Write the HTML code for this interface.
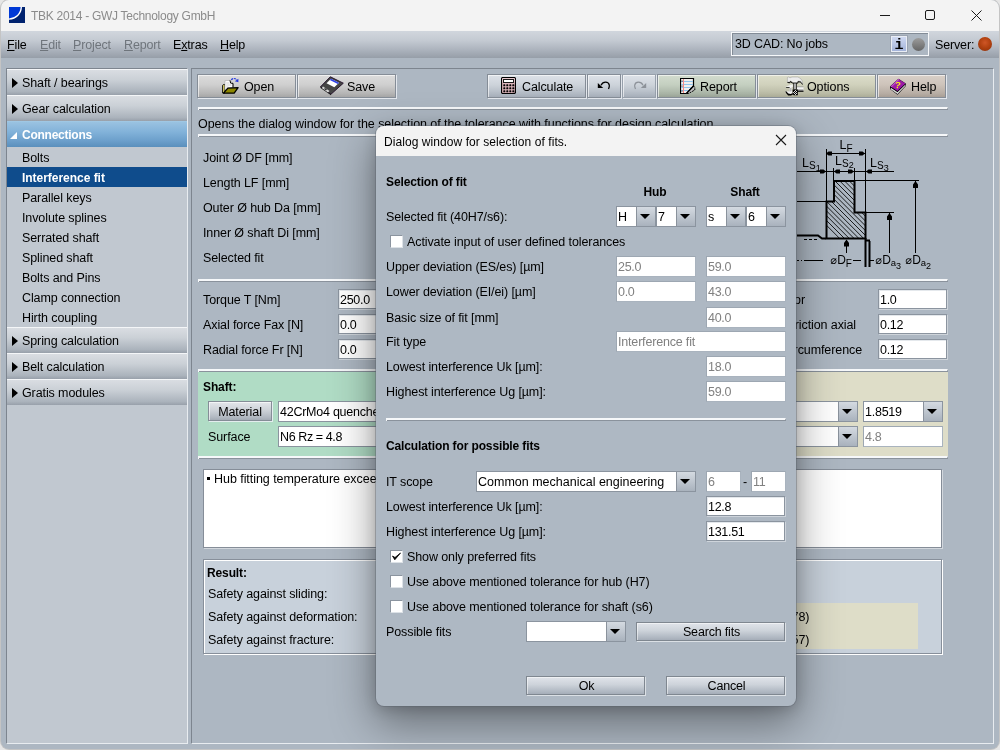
<!DOCTYPE html>
<html><head><meta charset="utf-8"><title>TBK 2014 - GWJ Technology GmbH</title>
<style>
html,body{margin:0;padding:0;}
body{width:1000px;height:750px;overflow:hidden;background:#e6e6e6;font-family:"Liberation Sans",Arial,sans-serif;font-size:12px;color:#000;}
#win{will-change:transform;position:absolute;left:0;top:0;width:1000px;height:750px;overflow:hidden;}
#bg{position:absolute;left:1px;top:0;width:998px;height:749px;border-radius:8px;background:#adb7c2;overflow:hidden;box-shadow:0 0 0 1px #c4c4c4;}
#win *{box-sizing:border-box;}
.a{position:absolute;}
.t{position:absolute;white-space:nowrap;height:20px;line-height:20px;font-size:12.5px;letter-spacing:-.1px;padding-top:1px;}
.b{font-weight:bold;font-size:12px;letter-spacing:-.12px;}
#title{position:absolute;left:0;top:0;width:998px;height:31px;background:#f3f3f3;}
#menubar{position:absolute;left:0;top:31px;width:998px;height:27px;background:linear-gradient(#d1d6dd 0%,#c4cad2 35%,#adb4be 68%,#969ea8 100%);}
.m{position:absolute;top:4px;height:20px;line-height:20px;font-size:12.5px;white-space:nowrap;letter-spacing:-.15px;}
.m u{text-decoration:underline;text-underline-offset:1px;}
.dis{color:#6f757c;}
/* left nav */
#nav{position:absolute;left:6px;top:68px;width:182px;height:676px;background:#c1c8d0;border:1px solid;border-color:#7d858f #e8ecf0 #e8ecf0 #7d858f;}
.hd{position:absolute;left:0;width:180px;height:26px;border-top:1px solid #f4f6f8;background:linear-gradient(#d9dde2 0%,#cad0d6 40%,#abb3bc 86%,#98a0aa 100%);}
.hd .t{left:15px;top:2px;}
.hd i{position:absolute;left:5px;top:7.5px;width:0;height:0;border-left:6px solid #000;border-top:5px solid transparent;border-bottom:5px solid transparent;}
.hd.sel{border-top-color:#9fc7e4;background:linear-gradient(#9ac2e1 0%,#82b2d9 40%,#6c9fcb 75%,#5a8fbc 100%);}
.hd.sel .t{color:#fff;font-weight:bold;font-size:12px;letter-spacing:-.25px;}
.it{position:absolute;left:0;width:180px;height:20px;}
.it .t{left:15px;top:0;}
.it.sel{background:#0f4c8c;}
.it.sel .t{color:#fff;font-weight:bold;font-size:12px;letter-spacing:-.03px;}
/* main */
#main{position:absolute;left:191px;top:68px;width:803px;height:676px;border:1px solid;border-color:#7d858f #e8ecf0 #e8ecf0 #7d858f;background:#adb7c2;}
.btn{position:absolute;height:24px;border:1px solid #858d97;background:linear-gradient(#dcdcdc 0%,#cfcfcf 45%,#b4b4b4 85%,#a6a6a6 100%);box-shadow:inset 1px 1px 0 rgba(255,255,255,.6),1px 1px 0 rgba(236,240,244,.85);}
.btn .t{top:1px;}
.sep{position:absolute;height:3px;border-top:2px solid #f6f8fa;border-left:1px solid #f6f8fa;border-right:1px solid #8a929c;background:#8a929c;}
.inp{position:absolute;height:20px;background:#fff;border:1px solid #8b949f;box-shadow:1px 1px 0 rgba(255,255,255,.4),inset 1px 1px 0 #e4e8ec;line-height:20px;padding-left:1px;white-space:nowrap;overflow:hidden;font-size:12.5px;letter-spacing:-.3px;}
.inp.ro{color:#818181;height:21px;border-color:#9da7b2 #a9b3be #a9b3be #9da7b2;box-shadow:none;}
.cb{position:absolute;height:21px;background:#fff;border:1px solid #8b949f;line-height:20px;padding-left:1px;white-space:nowrap;overflow:hidden;font-size:12.5px;letter-spacing:-.25px;}
.cb b{position:absolute;right:0;top:0;width:19px;height:19px;border-left:1px solid #8a929c;background:linear-gradient(#d4dae1,#a9b2bd);}
.cb b:after{content:"";position:absolute;left:3px;top:7px;border-top:5.5px solid #000;border-left:5px solid transparent;border-right:5px solid transparent;}
.chk{position:absolute;width:13px;height:13px;background:#fff;border:1px solid;border-color:#8b949f #dde2e7 #dde2e7 #8b949f;}
#mc{position:absolute;left:0;top:0;width:1000px;height:750px;}
/* dialog */
#dlg{position:absolute;left:376px;top:126px;width:420px;height:580px;border-radius:8px;background:#aeb8c3;box-shadow:0 0 0 1px rgba(90,98,108,.4),0 16px 44px 2px rgba(0,0,0,.40),0 3px 14px rgba(0,0,0,.16);overflow:hidden;}
#dt{position:absolute;left:0;top:0;width:420px;height:30px;background:#f3f3f3;}
.dbtn{position:absolute;border:1px solid #7f8790;background:linear-gradient(#e0e4ea 0%,#cdd3da 45%,#b0b8c2 85%,#a5adb8 100%);box-shadow:inset 1px 1px 0 rgba(255,255,255,.5),1px 1px 0 rgba(230,234,238,.8);text-align:center;font-size:12.5px;letter-spacing:-.18px;white-space:nowrap;padding-left:2px;}
</style></head><body>
<div id="win">
<div id="bg">
<div id="title">
<svg class="a" style="left:8px;top:7px" width="16" height="16" viewBox="0 0 16 16"><rect width="16" height="16" fill="#00226f"/><path d="M0 0H12.5C12 7 7 11.5 0 12Z" fill="#0039d6"/><path d="M12.3 0C12 7 7 11.6 0 12.1" fill="none" stroke="#fff" stroke-width="1.400"/></svg>
<div class="a" style="left:30px;top:6px;height:20px;line-height:20px;font-size:12px;letter-spacing:-.28px;color:#8b8b8b;white-space:nowrap;">TBK 2014 - GWJ Technology GmbH</div>
<svg class="a" style="left:860px;top:0" width="138" height="31" viewBox="0 0 138 31"><g stroke="#1a1a1a" stroke-width="1" fill="none"><path d="M19 15.5H29"/><rect x="64.500" y="10.500" width="9" height="9" rx="1.500"/><path d="M110.500 10.500L120.500 20.500M120.500 10.500L110.500 20.500"/></g></svg>
</div>
<div id="menubar">
<div class="m" style="left:6px;"><u>F</u>ile</div>
<div class="m dis" style="left:39px"><u>E</u>dit</div>
<div class="m dis" style="left:72px"><u>P</u>roject</div>
<div class="m dis" style="left:123px"><u>R</u>eport</div>
<div class="m" style="left:172px">E<u>x</u>tras</div>
<div class="m" style="left:219px"><u>H</u>elp</div>
<div class="a" style="left:730px;top:1px;width:198px;height:24px;border:1px solid #f6f8fa;background:#adb7c2;box-shadow:inset 1px 1px 0 #838c97;"></div>
<div class="m" style="left:734px;top:3px;">3D CAD: No jobs</div>
<div class="a" style="left:890px;top:5px;width:16px;height:16px;border:1px solid #e9edf4;background:linear-gradient(#cfd9f2,#a3b3d9);box-shadow:0 0 0 1px rgba(140,150,165,.55);font-family:'Liberation Mono',monospace;font-weight:bold;font-size:15px;line-height:17px;text-align:center;">i</div>
<div class="a" style="left:911px;top:7px;width:13px;height:13px;border-radius:50%;background:linear-gradient(#9c9c9c,#666);"></div>
<div class="m" style="left:934px;top:4px;">Server:</div>
<div class="a" style="left:977px;top:6px;width:14px;height:14px;border-radius:50%;background:radial-gradient(circle at 50% 40%,#cf5626,#b0400f 50%,#85300e 100%);"></div>
</div>
</div>
<div id="nav">
<div class="hd" style="top:0px"><i></i><div class="t">Shaft / bearings</div></div>
<div class="hd" style="top:26px"><i></i><div class="t">Gear calculation</div></div>
<div class="hd sel" style="top:52px"><i style="border:0;left:3px;top:10px;border-bottom:7px solid #fff;border-left:7px solid transparent;"></i><div class="t">Connections</div></div>
<div class="it" style="top:78px"><div class="t">Bolts</div></div>
<div class="it sel" style="top:98px"><div class="t">Interference fit</div></div>
<div class="it" style="top:118px"><div class="t">Parallel keys</div></div>
<div class="it" style="top:138px"><div class="t">Involute splines</div></div>
<div class="it" style="top:158px"><div class="t">Serrated shaft</div></div>
<div class="it" style="top:178px"><div class="t">Splined shaft</div></div>
<div class="it" style="top:198px"><div class="t">Bolts and Pins</div></div>
<div class="it" style="top:218px"><div class="t">Clamp connection</div></div>
<div class="it" style="top:238px"><div class="t">Hirth coupling</div></div>
<div class="hd" style="top:258px"><i></i><div class="t">Spring calculation</div></div>
<div class="hd" style="top:284px"><i></i><div class="t">Belt calculation</div></div>
<div class="hd" style="top:310px"><i></i><div class="t">Gratis modules</div></div>
</div>
<div id="main"></div>
<div id="mc">
<div class="btn" style="left:197px;top:74px;width:99px;"><svg class="a" style="left:24px;top:2px" width="17" height="17" viewBox="0 0 17 17"><path d="M9.300 3C10.500 1 13.500 .9 15 3.200" fill="none" stroke="#2438e0" stroke-width="1.100" stroke-dasharray="2.200 .8"/><path d="M12.800 4.300L16.400 1.800V5.200Z" fill="#2438e0"/>
<path d="M.6 16V8.300L1.400 7.600H3V16Z" fill="#ddd46a" stroke="#000" stroke-width=".9"/>
<path d="M3 3.700L8 3.400L11 6.400V10.500L5.900 11L3 13Z" fill="#fff" stroke="#a8a8a8" stroke-width=".6"/><path d="M8 3.400L8.600 6.100L11 6.400V10.400" fill="none" stroke="#000" stroke-width="1"/><path d="M4.200 6H7.500M4.200 8H9.500M4.200 10H6.500" stroke="#c4c4c4" stroke-width=".8"/>
<path d="M1.500 16.200L5.900 11.100L16.100 10.700L12.200 16.200Z" fill="#8d8700" stroke="#000" stroke-width="1.300" stroke-linejoin="round"/></svg><div class="t" style="left:46px">Open</div></div>
<div class="btn" style="left:297px;top:74px;width:99px;"><svg class="a" style="left:22px;top:1px" width="24" height="20" viewBox="0 0 24 20"><path d="M10.300 .8L23.300 7.200L11 18.200L.5 10.800Z" fill="#454545" stroke="#2a1830" stroke-width="1"/>
<path d="M.5 10.800L11 18.200V19.300L.5 12Z" fill="#111"/>
<path d="M11 2.800L19 6.800L14.300 11.300L6.500 7.200Z" fill="#fff"/><path d="M11 2.800L19 6.800L17.800 8L9.800 4Z" fill="#2b3ee6"/>
<path d="M3 10.500L9.500 15L8 16.500L1.800 12Z" fill="#d8d8d8"/><path d="M5 12L7 13.400L6 14.400L4 13Z" fill="#333"/></svg><div class="t" style="left:49px">Save</div></div>
<div class="btn" style="left:487px;top:74px;width:99px;background:linear-gradient(#dde2e8 0%,#cdd3da 45%,#b2bac4 85%,#a6aeb9 100%);"><svg class="a" style="left:13px;top:2px" width="15" height="17" viewBox="0 0 15 17"><rect x=".5" y=".5" width="14" height="16" rx="1.500" fill="#dcb4bb" stroke="#000" stroke-width="1.200"/><rect x="1.300" y="1.300" width="12.400" height="4" fill="#ecd0d4"/>
<rect x="2.500" y="2.500" width="10" height="3" fill="#fff" stroke="#1a1a1a" stroke-width="1"/>
<g fill="#000"><rect x="2.3" y="7.3" width="2" height="2" rx=".6"/><rect x="2.3" y="10.3" width="2" height="2" rx=".6"/><rect x="2.3" y="13.3" width="2" height="2" rx=".6"/><rect x="5.3" y="7.3" width="2" height="2" rx=".6"/><rect x="5.3" y="10.3" width="2" height="2" rx=".6"/><rect x="5.3" y="13.3" width="2" height="2" rx=".6"/><rect x="8.3" y="7.3" width="2" height="2" rx=".6"/><rect x="8.3" y="10.3" width="2" height="2" rx=".6"/><rect x="8.3" y="13.3" width="2" height="2" rx=".6"/><rect x="11.3" y="7.3" width="2" height="2" rx=".6"/><rect x="11.3" y="10.3" width="2" height="2" rx=".6"/><rect x="11.3" y="13.3" width="2" height="2" rx=".6"/></g></svg><div class="t" style="left:34px">Calculate</div></div>
<div class="btn" style="left:587px;top:74px;width:34px;background:linear-gradient(#dde2e8 0%,#cdd3da 45%,#b2bac4 85%,#a6aeb9 100%);"><svg class="a" style="left:9px;top:6px" width="14" height="9" viewBox="0 0 14 9"><path d="M.8 2V7H6.200Z" fill="#000"/><path d="M4 4.200C6 .2 11.500 .2 12.300 4.200C12.500 5.500 12 7 11.500 8" fill="none" stroke="#000" stroke-width="1.300"/></svg><div class="t" style="left:-588px"></div></div>
<div class="btn" style="left:622px;top:74px;width:34px;border-color:#98a1ac;background:linear-gradient(#dde2e8 0%,#cdd3da 45%,#b2bac4 85%,#a6aeb9 100%);"><svg class="a" style="left:10px;top:6px" width="14" height="9" viewBox="0 0 14 9"><path d="M13.200 2V7H7.800Z" fill="#8d9299"/><path d="M10 4.200C8 .2 2.500 .2 1.700 4.200C1.500 5.500 2 7 2.500 8" fill="none" stroke="#8d9299" stroke-width="1.200"/></svg><div class="t" style="left:-623px"></div></div>
<div class="btn" style="left:657px;top:74px;width:99px;background:linear-gradient(#d3dccf 0%,#c4cfc0 45%,#a9b4a6 85%,#9aa497 100%);"><svg class="a" style="left:22px;top:3px" width="16" height="17" viewBox="0 0 16 17"><path d="M.5 .5H13.500V8L6.500 15.500H.5Z" fill="#f1efee" stroke="#000" stroke-width="1.200"/>
<path d="M1.200 3.500H13M1.200 6.500H13M1.200 9.500H11M1.200 12.500H8" stroke="#8fc4ec" stroke-width="1"/><path d="M3.500 1V15" stroke="#f58a8a" stroke-width="1"/>
<path d="M2 3H2.010M2 8H2.010M2 13H2.010" stroke="#000" stroke-width="1.200" stroke-linecap="round"/>
<path d="M13.500 8L14.800 9.500V12L8.500 15.500H6.500Z" fill="#c2c2c2" stroke="#000" stroke-width="1" stroke-dasharray="2 .8"/><path d="M13.500 8L6.500 15.500" stroke="#000" stroke-width="1.200"/></svg><div class="t" style="left:42px">Report</div></div>
<div class="btn" style="left:757px;top:74px;width:119px;background:linear-gradient(#dcddca 0%,#d0d1bc 45%,#b9baa5 85%,#abac97 100%);"><svg class="a" style="left:27px;top:1px" width="19" height="20" viewBox="0 0 19 20">
<path d="M2.400 1.500L3.500 1L5 1.800L7 1H12.900L15.500 2.500L17 4.500L17.800 7.500L17 7.300L15.800 5.400L13 5L12.300 6.500H8L5.500 4.800L4.600 6H2.400Z" fill="#ececec" stroke="#9a9a9a" stroke-width=".5"/>
<path d="M2.400 6L4.600 6.200L5.500 5L7.800 6.700H12.300L13 5.200L15.600 5.600L17.200 7.800L17.800 7.600L17.500 9L15.500 6.500L13.500 6.300L13 7.600H7.500L5.500 6.200L4.800 7.200L2.600 7Z" fill="#000"/>
<rect x="8.400" y="7" width="3.300" height="6.600" fill="#000"/><rect x="9.300" y="7.400" width="1.400" height="6" fill="#f6f6f6"/>
<path d="M.5 11L5.600 8.800L7.800 8.600V10.800L6.500 11.500V15L7.400 14.200L7.600 17.200L5.600 18.600H3.300L1 16.500L.4 15.300L4.600 15.400V11.500L.8 11.600Z" fill="#f0f0f0"/>
<path d="M.6 11.200H4.600V12H1.500ZM.4 15.300L1.200 15.200L3.300 17.500L5.500 18L7.600 17.200L7.800 18.800L5.800 19.500H3.200L1 17Z" fill="#000"/>
<path d="M4.600 12H6.400V15.400H4.600Z" fill="#b8b8b8"/>
<rect x="12" y="10.800" width="6.500" height="4.300" fill="#f2f2f2"/><rect x="12" y="13" width="6.500" height="1.300" fill="#bdbdbd"/><rect x="12" y="14.500" width="6.500" height="1.300" fill="#000"/><rect x="12" y="10.500" width="6.500" height=".7" fill="#8a8a8a"/>
<path d="M7.600 13.500H12.800V19.200H8.600L7.600 17.500Z" fill="#000"/><path d="M9 15H10V16H9ZM11 15H12V16H11ZM10 16H11V17H10ZM9 17H10V18H9ZM11 17H12V18H11ZM10 14H11V15H10ZM8 16H9V17H8ZM10 18H11V19H10Z" fill="#d8d8d8"/></svg><div class="t" style="left:49px">Options</div></div>
<div class="btn" style="left:877px;top:74px;width:69px;background:linear-gradient(#d9d0c8 0%,#cdc3ba 45%,#b6aca3 85%,#a89e95 100%);"><svg class="a" style="left:11px;top:3px" width="18" height="18" viewBox="0 0 18 18"><path d="M1 11V8.500L9.500 .8L16.800 5.500V8L8.500 16.800Z" fill="#000"/>
<path d="M1.500 8.500L9.500 1L16.500 5.500L8.500 13Z" fill="#9c1aa6"/><path d="M1.500 8.500L9.500 1L10.500 1.600L2.500 9.200Z" fill="#c34fd0"/>
<path d="M1.800 9.800L8.500 14.200L16.300 6.800V7.800L8.500 16L1.800 11.200Z" fill="#f2f2f2"/><path d="M1.800 10.800L8.500 15.200L16.300 7.500" fill="none" stroke="#b0b0b0" stroke-width=".6"/>
<text x="6.200" y="10.200" font-family="Liberation Sans, sans-serif" font-weight="bold" font-size="9" fill="#f4ee1c" transform="rotate(8 9 7)">?</text></svg><div class="t" style="left:33px">Help</div></div>
<div class="sep" style="left:198px;top:107px;width:750px"></div>
<div class="sep" style="left:198px;top:134px;width:750px"></div>
<div class="sep" style="left:198px;top:279px;width:750px"></div>
<div class="sep" style="left:198px;top:369px;width:750px"></div>
<div class="t" style="left:198px;top:113px;letter-spacing:-.06px;">Opens the dialog window for the selection of the tolerance with functions for design calculation</div>
<div class="t" style="left:203px;top:147px;">Joint Ø DF [mm]</div>
<div class="t" style="left:203px;top:172px;">Length LF [mm]</div>
<div class="t" style="left:203px;top:197px;">Outer Ø hub Da [mm]</div>
<div class="t" style="left:203px;top:222px;">Inner Ø shaft Di [mm]</div>
<div class="t" style="left:203px;top:247px;">Selected fit</div>
<div class="t" style="left:203px;top:289px;">Torque T [Nm]</div>
<div class="inp" style="left:338px;top:289px;width:70px">250.0</div>
<div class="t" style="left:203px;top:314px;">Axial force Fax [N]</div>
<div class="inp" style="left:338px;top:314px;width:70px">0.0</div>
<div class="t" style="left:203px;top:339px;">Radial force Fr [N]</div>
<div class="inp" style="left:338px;top:339px;width:70px">0.0</div>
<div class="t" style="right:195px;top:289px">Application factor</div>
<div class="inp" style="left:878px;top:289px;width:69px">1.0</div>
<div class="t" style="right:144px;top:314px">Coefficient of friction axial</div>
<div class="inp" style="left:878px;top:314px;width:69px">0.12</div>
<div class="t" style="right:138px;top:339px">Coefficient of friction circumference</div>
<div class="inp" style="left:878px;top:339px;width:69px">0.12</div>
<svg class="a" style="left:790px;top:136px" width="160" height="144" viewBox="790 136 160 144" font-family="Liberation Sans, sans-serif" fill="#000">
<defs><clipPath id="hc"><path d="M834 181H854.500V212.500H865.500V238.500H826.500V201.500H834Z"/></clipPath></defs>
<g stroke="#000" stroke-width="1" fill="none" shape-rendering="crispEdges">
<path d="M826.500 149V201M865.500 149V213M826 153.500H865M797 171.500H894M833.500 168V181M854.500 168V181M797 201.500H826M854 180.500H919M865 212.500H894M915.500 181V253M889.500 213V253M846.500 240V253"/>
<path d="M804 239.500H818" stroke-dasharray="3 2"/>
<path d="M797 260.500H799M801 260.500H802M804 260.500H823M853 260.500H861M870 260.500H874"/>
</g>
<g clip-path="url(#hc)" stroke="#000" stroke-width=".85" fill="none"><path d="M820 127.6L870 177.6M820 132.4L870 182.4M820 137.2L870 187.2M820 142.0L870 192.0M820 146.8L870 196.8M820 151.6L870 201.6M820 156.4L870 206.4M820 161.2L870 211.2M820 166.0L870 216.0M820 170.8L870 220.8M820 175.6L870 225.6M820 180.4L870 230.4M820 185.2L870 235.2M820 190.0L870 240.0M820 194.8L870 244.8M820 199.6L870 249.6M820 204.4L870 254.4M820 209.2L870 259.2M820 214.0L870 264.0M820 218.8L870 268.8"/></g>
<path d="M834 181H854.500V212.500H865.500V238.500H826.500V201.500H834Z" fill="none" stroke="#000" stroke-width="2" stroke-linejoin="miter"/>
<path d="M797 235.500H818L822 238.500H826" fill="none" stroke="#000" stroke-width="2"/>
<path d="M865.500 238V267M869.500 241V267M865 240.500H870" fill="none" stroke="#000" stroke-width="2"/>
<path d="M826 153.5L828.5 151.5H832V155.5H828.5ZM865 153.5L862.5 151.5H859V155.5H862.5ZM826 171.5L823.5 169.5H820V173.5H823.5ZM834 171.5L836.5 169.5H840V173.5H836.5ZM854 171.5L851.5 169.5H848V173.5H851.5ZM866 171.5L868.5 169.5H872V173.5H868.5ZM915.5 181L913.0 184.5V188H918.0V184.5ZM889.5 213L887.0 216.5V220H892.0V216.5ZM846.5 239.5L844.0 243.0V246.5H849.0V243.0Z"/>
<text x="839.500" y="149" font-size="12.500">L<tspan font-size="10" dy="2.500">F</tspan></text>
<text x="802" y="167" font-size="12.500">L<tspan font-size="10" dy="2">S</tspan><tspan font-size="9" dy="1.500">1</tspan></text>
<text x="835" y="164.500" font-size="12.500">L<tspan font-size="10" dy="2">S</tspan><tspan font-size="9" dy="1.500">2</tspan></text>
<text x="870" y="167" font-size="12.500">L<tspan font-size="10" dy="2">S</tspan><tspan font-size="9" dy="1.500">3</tspan></text>
<text x="830.500" y="264" font-size="12"><tspan font-family="DejaVu Sans, sans-serif" font-size="11">⌀</tspan>D<tspan font-size="10" dy="2.500">F</tspan></text>
<text x="875.500" y="264" font-size="12"><tspan font-family="DejaVu Sans, sans-serif" font-size="11">⌀</tspan>D<tspan font-size="9.500" dy="2">a</tspan><tspan font-size="9" dy="2.500">3</tspan></text>
<text x="905.500" y="264" font-size="12"><tspan font-family="DejaVu Sans, sans-serif" font-size="11">⌀</tspan>D<tspan font-size="9.500" dy="2">a</tspan><tspan font-size="9" dy="2.500">2</tspan></text>
</svg>
<div class="a" style="left:198px;top:372px;width:375px;height:84px;background:#b0dcc5"></div>
<div class="a" style="left:573px;top:372px;width:375px;height:84px;background:#deddc8"></div>
<div class="sep" style="left:198px;top:456px;width:750px;"></div>
<div class="t b" style="left:203px;top:376px;">Shaft:</div>
<div class="t b" style="left:578px;top:376px;">Hub:</div>
<div class="btn" style="left:208px;top:401px;width:64px;height:20px;background:linear-gradient(#e3e6ea 0%,#cdd2d8 45%,#b1b8c1 85%,#a3abb5 100%);"><div class="t" style="left:0;width:62px;text-align:center;top:-1px">Material</div></div>
<div class="cb" style="left:278px;top:401px;width:205px;letter-spacing:-.25px">42CrMo4 quenched and tempered<b></b></div>
<div class="t" style="left:208px;top:426px;">Surface</div>
<div class="cb" style="left:278px;top:426px;width:205px;letter-spacing:-.4px">N6 Rz = 4.8<b></b></div>
<div class="cb" style="left:653px;top:401px;width:205px">EN-GJL-250<b></b></div>
<div class="cb" style="left:863px;top:401px;width:80px">1.8519<b></b></div>
<div class="cb" style="left:653px;top:426px;width:205px;letter-spacing:-.4px">N6 Rz = 4.8<b></b></div>
<div class="inp ro" style="left:863px;top:426px;width:80px">4.8</div>
<div class="a" style="left:203px;top:469px;width:739px;height:79px;background:#fff;border:1px solid #858d98;box-shadow:1px 1px 0 rgba(255,255,255,.45);"></div>
<div class="a" style="left:207px;top:477px;width:3px;height:3px;background:#000"></div><div class="t" style="left:214px;top:468px;letter-spacing:-.05px;">Hub fitting temperature exceeds the permissible value</div>
<div class="a" style="left:203px;top:559px;width:739px;height:95px;background:#c8d1db;border:1px solid #878f9a;box-shadow:inset 1px 1px 0 #fff,1px 1px 0 #fff;"></div>
<div class="a" style="left:573px;top:603px;width:345px;height:46px;background:#deddc8"></div>
<div class="t b" style="left:207px;top:562px;">Result:</div>
<div class="t" style="left:208px;top:583px;">Safety against sliding:</div>
<div class="t" style="left:208px;top:606px;">Safety against deformation:</div>
<div class="t" style="left:208px;top:629px;">Safety against fracture:</div>
<div class="t" style="left:750px;top:606px;">1.51 (1.78)</div>
<div class="t" style="left:750px;top:629px;">1.89 (2.57)</div>
</div>
<div id="dlg">
<div id="dt"></div>
<div class="t" style="left:8px;top:5px;font-size:12px;letter-spacing:.07px;">Dialog window for selection of fits.</div>
<svg class="a" style="left:399px;top:8px" width="12" height="12" viewBox="0 0 12 12"><path d="M1 1L11 11M11 1L1 11" stroke="#1a1a1a" stroke-width="1.100" fill="none"/></svg>
<div class="t b" style="left:10px;top:45px;">Selection of fit</div>
<div class="t b" style="left:259px;top:55px;width:40px;text-align:center;">Hub</div>
<div class="t b" style="left:339px;top:55px;width:60px;text-align:center;">Shaft</div>
<div class="t" style="left:10px;top:80px;">Selected fit (40H7/s6):</div>
<div class="cb" style="left:240px;top:80px;width:40px">H<b></b></div>
<div class="cb" style="left:280px;top:80px;width:40px">7<b></b></div>
<div class="cb" style="left:330px;top:80px;width:40px">s<b></b></div>
<div class="cb" style="left:370px;top:80px;width:40px">6<b></b></div>
<div class="chk" style="left:14px;top:109px"></div>
<div class="t" style="left:31px;top:105px;">Activate input of user defined tolerances</div>
<div class="t" style="left:10px;top:130px;">Upper deviation (ES/es) [µm]</div>
<div class="inp ro" style="left:240px;top:130px;width:80px">25.0</div>
<div class="inp ro" style="left:330px;top:130px;width:80px">59.0</div>
<div class="t" style="left:10px;top:155px;">Lower deviation (EI/ei) [µm]</div>
<div class="inp ro" style="left:240px;top:155px;width:80px">0.0</div>
<div class="inp ro" style="left:330px;top:155px;width:80px">43.0</div>
<div class="t" style="left:10px;top:181px;">Basic size of fit [mm]</div>
<div class="inp ro" style="left:330px;top:181px;width:80px">40.0</div>
<div class="t" style="left:10px;top:205px;">Fit type</div>
<div class="inp ro" style="left:240px;top:205px;width:170px;letter-spacing:-.18px">Interference fit</div>
<div class="t" style="left:10px;top:230px;">Lowest interference Uk [µm]:</div>
<div class="inp ro" style="left:330px;top:230px;width:80px">18.0</div>
<div class="t" style="left:10px;top:255px;">Highest interference Ug [µm]:</div>
<div class="inp ro" style="left:330px;top:255px;width:80px">59.0</div>
<div class="sep" style="left:10px;top:292px;width:400px"></div>
<div class="t b" style="left:10px;top:309px;">Calculation for possible fits</div>
<div class="t" style="left:10px;top:345px;">IT scope</div>
<div class="cb" style="left:100px;top:345px;width:220px;letter-spacing:0">Common mechanical engineering<b></b></div>
<div class="inp ro" style="left:330px;top:345px;width:35px">6</div>
<div class="t" style="left:367px;top:345px;">-</div>
<div class="inp ro" style="left:375px;top:345px;width:35px">11</div>
<div class="t" style="left:10px;top:370px;">Lowest interference Uk [µm]:</div>
<div class="inp" style="left:330px;top:370px;width:79px">12.8</div>
<div class="t" style="left:10px;top:395px;">Highest interference Ug [µm]:</div>
<div class="inp" style="left:330px;top:395px;width:79px">131.51</div>
<div class="chk" style="left:14px;top:424px"><svg width="11" height="11" viewBox="0 0 11 11" style="position:absolute;left:0;top:0"><path d="M1.500 5L3.800 8.800L9.500 2L4 6.500Z" fill="#000" stroke="#000" stroke-width=".8" stroke-linejoin="round"/></svg></div>
<div class="t" style="left:31px;top:420px;">Show only preferred fits</div>
<div class="chk" style="left:14px;top:449px"></div>
<div class="t" style="left:31px;top:445px;">Use above mentioned tolerance for hub (H7)</div>
<div class="chk" style="left:14px;top:474px"></div>
<div class="t" style="left:31px;top:470px;">Use above mentioned tolerance for shaft (s6)</div>
<div class="t" style="left:10px;top:495px;">Possible fits</div>
<div class="cb" style="left:150px;top:495px;width:100px"><b></b></div>
<div class="dbtn" style="left:260px;top:496px;width:149px;height:19px;line-height:19px">Search fits</div>
<div class="dbtn" style="left:150px;top:550px;width:119px;height:19px;line-height:19px">Ok</div>
<div class="dbtn" style="left:290px;top:550px;width:119px;height:19px;line-height:19px">Cancel</div>
</div>
</div>
</body></html>
